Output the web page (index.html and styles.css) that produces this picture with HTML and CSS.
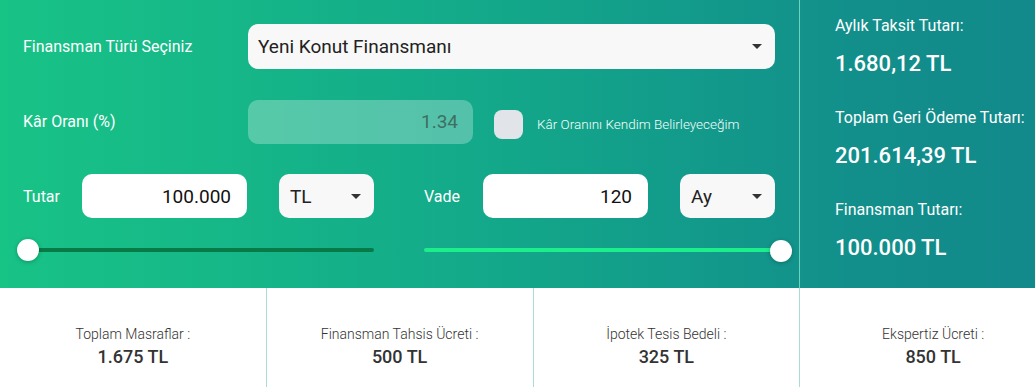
FILE: index.html
```html
<!DOCTYPE html>
<html lang="tr">
<head>
<meta charset="utf-8">
<title>Finansman Hesaplama</title>
<link rel="stylesheet" href="styles.css">
</head>
<body>
<div class="calc">
  <div class="top">
    <div class="form">
      <div class="row">
        <span class="lbl lbl-type">Finansman Türü Seçiniz</span>
        <div class="select select-wide"><span>Yeni Konut Finansmanı</span><i class="caret"></i></div>
      </div>
      <div class="row">
        <span class="lbl lbl-type">Kâr Oranı (%)</span>
        <div class="input input-disabled">1.34</div>
        <span class="check"></span>
        <span class="check-lbl">Kâr Oranını Kendim Belirleyeceğim</span>
      </div>
      <div class="pair">
        <div class="group">
          <span class="lbl lbl-short">Tutar</span>
          <div class="input">100.000</div>
          <div class="select select-small"><span>TL</span><i class="caret"></i></div>
        </div>
        <div class="group">
          <span class="lbl lbl-short">Vade</span>
          <div class="input">120</div>
          <div class="select select-small"><span>Ay</span><i class="caret"></i></div>
        </div>
      </div>
      <div class="pair sliders">
        <div class="slider slider-left"><span class="track"></span><span class="thumb"></span></div>
        <div class="slider slider-right"><span class="track"></span><span class="thumb"></span></div>
      </div>
    </div>
    <div class="results">
      <div class="res-lbl">Aylık Taksit Tutarı:</div>
      <div class="res-val">1.680,12 TL</div>
      <div class="res-lbl">Toplam Geri Ödeme Tutarı:</div>
      <div class="res-val">201.614,39 TL</div>
      <div class="res-lbl">Finansman Tutarı:</div>
      <div class="res-val">100.000 TL</div>
    </div>
  </div>
  <div class="costs">
    <div class="cost"><div class="cost-lbl">Toplam Masraflar :</div><div class="cost-val">1.675 TL</div></div>
    <div class="cost"><div class="cost-lbl">Finansman Tahsis Ücreti :</div><div class="cost-val">500 TL</div></div>
    <div class="cost"><div class="cost-lbl">İpotek Tesis Bedeli :</div><div class="cost-val">325 TL</div></div>
    <div class="cost"><div class="cost-lbl">Ekspertiz Ücreti :</div><div class="cost-val">850 TL</div></div>
  </div>
</div>
</body>
</html>
```

FILE: styles.css
```css
html, body {
  margin: 0;
  padding: 0;
  background: #ffffff;
  overflow: hidden;
}

body {
  font-family: "Roboto", "Liberation Sans", sans-serif;
  width: 1035px;
  height: 387px;
}

.calc {
  width: 1067px;
}

.top {
  display: flex;
  height: 288px;
  background: linear-gradient(90deg, #18c386 0%, #13a98a 45%, #128f8b 80%, #12888b 100%);
  color: #ffffff;
}

.form {
  width: 799px;
  flex: none;
  padding: 24px 0 0 23px;
  box-sizing: border-box;
  display: flex;
  flex-direction: column;
}

.row {
  display: flex;
  align-items: center;
  height: 45px;
  margin-bottom: 30px;
}

.lbl {
  font-size: 16px;
  color: #ffffff;
}

.lbl-type {
  width: 225px;
  flex: none;
}

.lbl-short {
  width: 59px;
  flex: none;
}

.select {
  display: flex;
  align-items: center;
  justify-content: space-between;
  height: 45px;
  box-sizing: border-box;
  background: #f8f8f8;
  border-radius: 10px;
  color: #222222;
  font-size: 19px;
  padding: 0 13px 0 11px;
}

.select-wide {
  width: 527px;
  padding-left: 10px;
}

.select-small {
  width: 95px;
  flex: none;
  height: 44px;
}

.caret {
  width: 0;
  height: 0;
  border-left: 5px solid transparent;
  border-right: 5px solid transparent;
  border-top: 5px solid #333333;
}

.input {
  width: 165px;
  flex: none;
  height: 44px;
  box-sizing: border-box;
  background: #ffffff;
  border-radius: 10px;
  color: #111111;
  font-size: 19px;
  display: flex;
  align-items: center;
  justify-content: flex-end;
  padding-right: 16px;
}

.input-disabled {
  width: 225px;
  background: rgba(255, 255, 255, 0.28);
  color: #3e6f62;
  padding-right: 15px;
}

.check {
  width: 29px;
  height: 29px;
  margin-left: 21px;
  margin-top: 5px;
  border-radius: 8px;
  background: #e1e4e8;
  flex: none;
}

.check-lbl {
  font-size: 13.5px;
  font-weight: 300;
  margin-left: 14px;
  margin-top: 4px;
  color: #f4fffb;
}

.pair {
  display: grid;
  grid-template-columns: 351px 351px;
  column-gap: 50px;
}

.group {
  display: flex;
  align-items: center;
  height: 44px;
}

.group .input {
  margin-right: 32px;
}

.sliders {
  margin-top: 21px;
}

.slider {
  position: relative;
  height: 22px;
  display: flex;
  align-items: center;
}

.track {
  display: block;
  height: 4px;
  border-radius: 2px;
  width: 100%;
}

.slider-left {
  margin-left: 5px;
}

.slider-left .track {
  background: #077b47;
}

.slider-right {
  margin-right: -6px;
}

.slider-right .track {
  background: #1cee8b;
}

.thumb {
  position: absolute;
  top: 0;
  width: 22px;
  height: 22px;
  border-radius: 50%;
  background: #ffffff;
  box-shadow: 0 1px 4px rgba(0, 0, 0, 0.25);
}

.slider-left .thumb {
  left: -11px;
}

.slider-right .thumb {
  right: -11px;
  top: 1px;
}

.results {
  flex: 1;
  border-left: 1px solid #6cd3bd;
  padding: 16px 0 0 35px;
  box-sizing: border-box;
}

.res-lbl {
  font-size: 16px;
  line-height: 20px;
}

.res-val {
  font-size: 22px;
  font-weight: 500;
  line-height: 26px;
  margin: 15px 0 31px;
}

.costs {
  display: grid;
  grid-template-columns: repeat(4, 1fr);
  height: 99px;
  background: #ffffff;
}

.cost {
  border-right: 1px solid #a9ded4;
  text-align: center;
  padding-top: 37px;
  color: #333333;
}

.cost-lbl {
  font-size: 14px;
  font-weight: 300;
  line-height: 18px;
}

.cost-val {
  font-size: 18px;
  font-weight: 500;
  line-height: 22px;
  margin-top: 3px;
}
```
